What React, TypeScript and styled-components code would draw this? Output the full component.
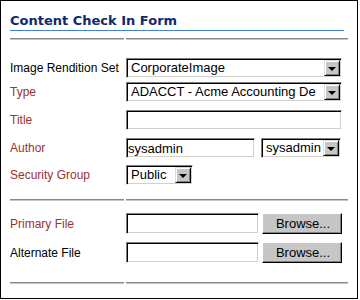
import styled, { createGlobalStyle, css } from 'styled-components';

const GlobalStyle = createGlobalStyle`
  body {
    margin: 0;
    background: #fff;
    font-family: "Liberation Sans", Arial, sans-serif;
  }
`;

type FieldRow = {
  label: string;
  required?: boolean;
  top: number;
  kind: 'select' | 'input' | 'author' | 'group' | 'file';
  value?: string;
};

const metaRows: FieldRow[] = [
  { label: 'Image Rendition Set', top: 18, kind: 'select', value: 'CorporateImage' },
  { label: 'Type', required: true, top: 4, kind: 'select', value: 'ADACCT - Acme Accounting De' },
  { label: 'Title', required: true, top: 8, kind: 'input' },
  { label: 'Author', required: true, top: 8, kind: 'author', value: 'sysadmin' },
  { label: 'Security Group', required: true, top: 7, kind: 'group', value: 'Public' },
];

const fileRows: FieldRow[] = [
  { label: 'Primary File', required: true, top: 12, kind: 'file' },
  { label: 'Alternate File', top: 8, kind: 'file' },
];

function Select({ width, value }: { width: number; value: string }) {
  return (
    <SelectBox $w={width}>
      <SelectText>{value}</SelectText>
      <ArrowButton />
    </SelectBox>
  );
}

function Control({ row }: { row: FieldRow }) {
  switch (row.kind) {
    case 'select':
      return <Select width={216} value={row.value ?? ''} />;
    case 'input':
      return <TextInput $w={216} $h={20} defaultValue="" />;
    case 'author':
      return (
        <Inline $gap={6}>
          <TextInput $w={129} $h={20} defaultValue={row.value} />
          <Select width={80} value={row.value ?? ''} />
        </Inline>
      );
    case 'group':
      return <Select width={67} value={row.value ?? ''} />;
    case 'file':
      return (
        <Inline $gap={3}>
          <TextInput $w={133} $h={21} defaultValue="" />
          <BrowseButton type="button">Browse...</BrowseButton>
        </Inline>
      );
  }
}

function Divider({ top }: { top: number }) {
  return (
    <Grid $mt={top}>
      <Rule />
      <Rule />
    </Grid>
  );
}

function App() {
  return (
    <>
      <GlobalStyle />
      <Frame>
        <Heading>Content Check In Form</Heading>
        <Divider top={7} />

        {metaRows.map(row => (
          <Grid key={row.label} $mt={row.top}>
            <Label $required={row.required}>{row.label}</Label>
            <Control row={row} />
          </Grid>
        ))}

        <Divider top={14} />

        {fileRows.map(row => (
          <Grid key={row.label} $mt={row.top}>
            <Label $required={row.required}>{row.label}</Label>
            <Control row={row} />
          </Grid>
        ))}

        <Divider top={19} />
      </Frame>
    </>
  );
}

export default App;

const Frame = styled.div`
  box-sizing: border-box;
  width: 358px;
  height: 299px;
  padding-left: 9px;
  border: 1px solid #000;
  background: #fff;
`;

const Heading = styled.h1`
  width: 334px;
  margin: 0;
  padding: 12px 0 1px 0;
  font: bold 13px/16px "DejaVu Sans", Verdana, sans-serif;
  color: #0f2a6d;
  border-bottom: 1px solid #3f82d9;
`;

const Grid = styled.div<{ $mt: number }>`
  display: grid;
  grid-template-columns: 114px 222px;
  column-gap: 2px;
  align-items: center;
  margin-top: ${({ $mt }) => $mt}px;
`;

const Rule = styled.div`
  box-sizing: border-box;
  height: 2px;
  border-top: 1px solid #8a8a8a;
  border-bottom: 1px solid #c4c4c4;
`;

const Label = styled.div<{ $required?: boolean }>`
  font-size: 12px;
  line-height: 14px;
  white-space: nowrap;
  color: ${({ $required }) => ($required ? '#993333' : '#000')};
`;

const Inline = styled.div<{ $gap: number }>`
  display: flex;
  align-items: center;
  gap: ${({ $gap }) => $gap}px;
`;

const sunken = css`
  box-sizing: border-box;
  border: 1px solid;
  border-color: #808080 #fff #fff #808080;
  box-shadow: inset 1px 1px 0 #000, inset -1px -1px 0 #d4d0c8;
  background: #fff;
  font: 13px "Liberation Sans", Arial, sans-serif;
  color: #000;
`;

const SelectBox = styled.div<{ $w: number }>`
  ${sunken}
  display: flex;
  align-items: center;
  width: ${({ $w }) => $w}px;
  height: 20px;
  padding: 1px;
`;

const SelectText = styled.span`
  flex: 1;
  min-width: 0;
  padding-left: 3px;
  overflow: hidden;
  white-space: nowrap;
  line-height: 16px;
`;

const ArrowButton = styled.span`
  box-sizing: border-box;
  display: flex;
  align-items: center;
  justify-content: center;
  flex: none;
  width: 16px;
  height: 16px;
  background: #c6c6c6;
  border: 1px solid;
  border-color: #dcdcdc #000 #000 #dcdcdc;
  box-shadow: inset 1px 1px 0 #fff, inset -1px -1px 0 #808080;

  &::after {
    content: '';
    margin-top: 1px;
    border-left: 4px solid transparent;
    border-right: 4px solid transparent;
    border-top: 4px solid #000;
  }
`;

const TextInput = styled.input<{ $w: number; $h: number }>`
  ${sunken}
  width: ${({ $w }) => $w}px;
  height: ${({ $h }) => $h}px;
  margin: 0;
  padding: 0 2px 0 1px;
  outline: none;
`;

const BrowseButton = styled.button`
  box-sizing: border-box;
  width: 80px;
  height: 21px;
  margin: 0;
  padding: 0 0 0 2px;
  font: 13px "Liberation Sans", Arial, sans-serif;
  color: #000;
  background: #c6c6c6;
  border: 1px solid;
  border-color: #fff #000 #000 #fff;
  box-shadow: inset -1px -1px 0 #808080;
`;
